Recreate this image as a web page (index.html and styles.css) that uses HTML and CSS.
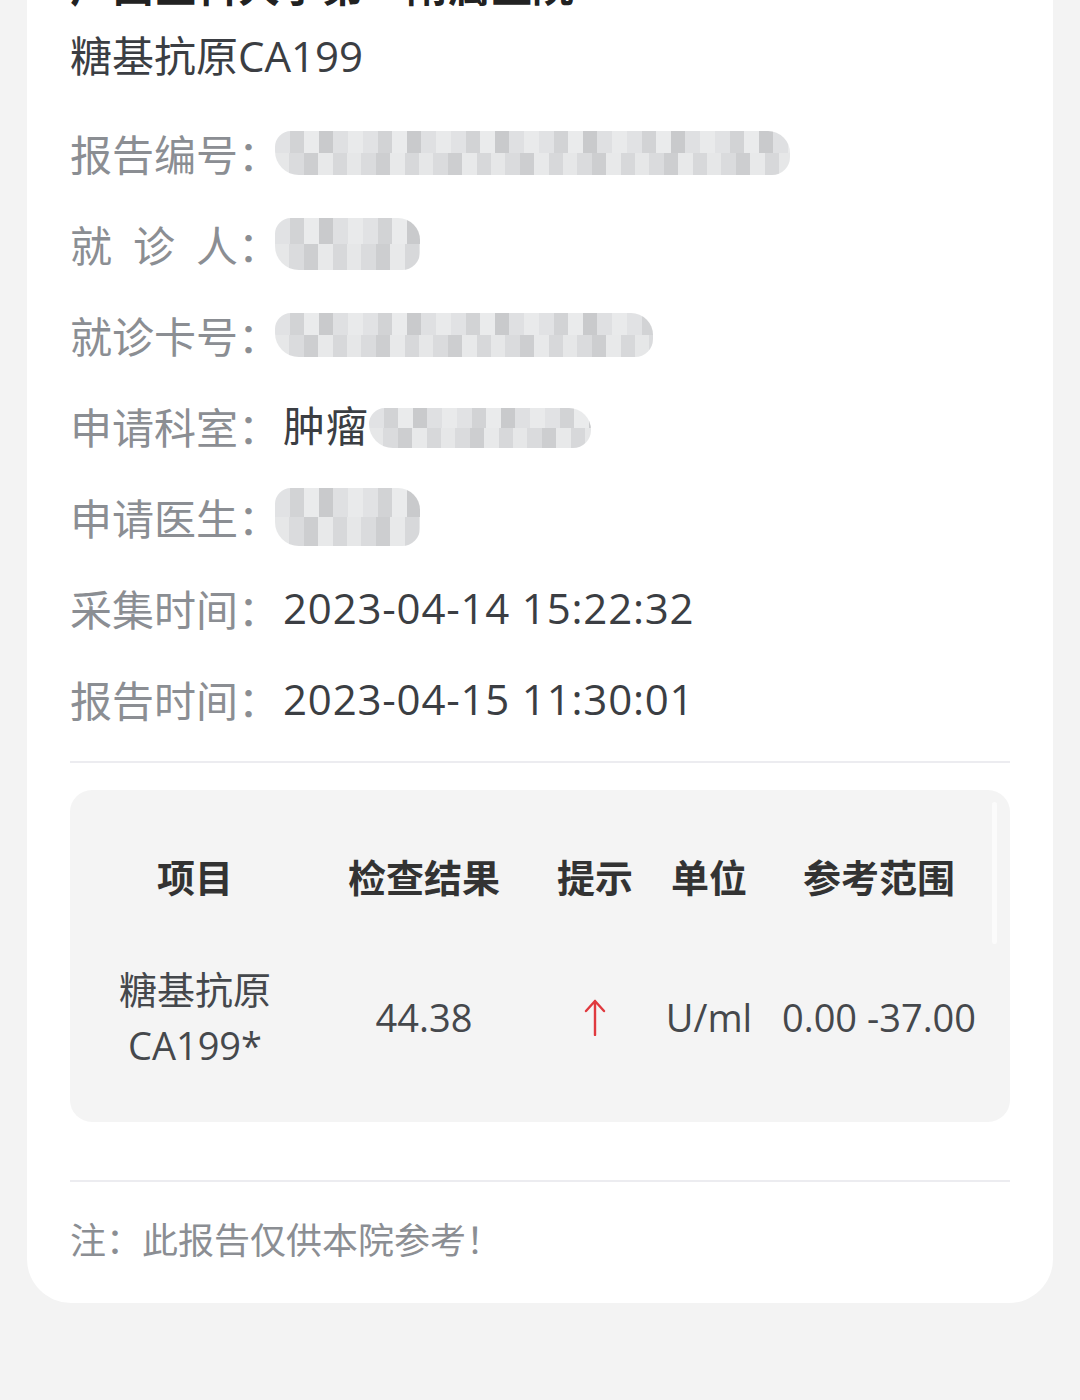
FILE: index.html
```html
<!DOCTYPE html>
<html lang="zh-CN">
<head>
  <meta charset="UTF-8" />
  <meta name="viewport" content="width=device-width, initial-scale=1.0"/>
  <title>检验报告详情</title>
  <link rel="stylesheet" href="styles.css">
</head>
<body>

  <div class="card">
    <h1 class="hospital">广西医科大学第一附属医院</h1>
    <div class="report-name">糖基抗原CA199</div>

    <div class="info">
      <div class="row">
        <span class="label">报告编号</span><span class="colon">：</span>
        <span class="mask mask-long"></span>
      </div>
      <div class="row">
        <span class="label">就 诊 人</span><span class="colon">：</span>
        <span class="mask mask-short"></span>
      </div>
      <div class="row">
        <span class="label">就诊卡号</span><span class="colon">：</span>
        <span class="mask mask-card"></span>
      </div>
      <div class="row">
        <span class="label">申请科室</span><span class="colon">：</span>
        <span class="value">肿瘤</span><span class="mask mask-dept"></span>
      </div>
      <div class="row">
        <span class="label">申请医生</span><span class="colon">：</span>
        <span class="mask mask-short mask-doc"></span>
      </div>
      <div class="row">
        <span class="label">采集时间</span><span class="colon">：</span>
        <span class="value">2023-04-14 15:22:32</span>
      </div>
      <div class="row">
        <span class="label">报告时间</span><span class="colon">：</span>
        <span class="value">2023-04-15 11:30:01</span>
      </div>
    </div>

    <hr class="divider" />

    <div class="result-box">
      <div class="scrollbar"></div>
      <div class="result-table">
        <div class="th">项目</div>
        <div class="th">检查结果</div>
        <div class="th">提示</div>
        <div class="th">单位</div>
        <div class="th">参考范围</div>

        <div class="td">糖基抗原<br>CA199*</div>
        <div class="td">44.38</div>
        <div class="td">
          <svg class="arrow-up" width="22" height="38" viewBox="0 0 22 38">
            <path d="M11 37 V3 M2 13 L11 3 L20 13" fill="none" stroke="#e0393e" stroke-width="2.4" stroke-linecap="round" stroke-linejoin="round"/>
          </svg>
        </div>
        <div class="td">U/ml</div>
        <div class="td">0.00 -37.00</div>
      </div>
    </div>

    <hr class="divider divider-bottom" />

    <p class="note">注：此报告仅供本院参考！</p>
  </div>

</body>
</html>
```

FILE: styles.css
```css
* {
  margin: 0;
  padding: 0;
  box-sizing: border-box;
  font-family: 'Open Sans', 'Noto Sans CJK SC', sans-serif;
}

body {
  background-color: #f3f3f3;
  min-height: 100vh;
}

.card {
  background-color: #fff;
  margin: -42px 27px 0;
  padding: 0 43px 40px;
  border-radius: 0 0 44px 44px;
}

.hospital {
  font-size: 42px;
  line-height: 56px;
  font-weight: 700;
  color: #222;
  white-space: nowrap;
}

.report-name {
  margin-top: 14px;
  font-size: 42px;
  line-height: 56px;
  color: #3b3e43;
}

.info {
  margin-top: 41px;
  display: flex;
  flex-direction: column;
  gap: 35px;
}

.row {
  display: flex;
  align-items: center;
  height: 56px;
  font-size: 42px;
  line-height: 56px;
}

.label {
  display: inline-block;
  width: 168px;
  color: #8b8e93;
  text-align: justify;
  text-align-last: justify;
  font-family: 'Noto Sans CJK SC', sans-serif;
}

.colon {
  width: 45px;
  color: #8b8e93;
  font-family: 'Noto Sans CJK SC', sans-serif;
}

.value {
  color: #3b3e43;
  white-space: nowrap;
  letter-spacing: 0.8px;
}

/* blurred personal data */
.mask {
  display: inline-block;
  height: 44px;
  border-radius: 16px 22px 18px 24px;
  background-color: #eeeff0;
  background-image:
    repeating-linear-gradient(90deg, #e1e2e4 0 15px, #d2d3d5 15px 29px, #eaebec 29px 44px, #c9cacc 44px 58px, #dfe0e2 58px 73px, #e9eaeb 73px 88px),
    repeating-linear-gradient(90deg, #e6e7e8 0 14px, #dadbdd 14px 29px, #cdced0 29px 43px, #e8e9ea 43px 58px, #d7d8da 58px 72px);
  background-size: 100% 50%, 100% 50%;
  background-position: 0 0, 0 100%;
  background-repeat: no-repeat;
}

.mask-long {
  width: 515px;
  margin-left: -8px;
}

.mask-short {
  width: 145px;
  height: 52px;
  margin-left: -8px;
}

.mask-card {
  width: 378px;
  margin-left: -8px;
}

.mask-dept {
  width: 222px;
  height: 40px;
  margin-top: 4px;
}

.mask-doc {
  height: 58px;
}

.divider {
  border: none;
  height: 2px;
  background-color: #ececf0;
  margin-top: 34px;
}

.result-box {
  position: relative;
  margin-top: 27px;
  background-color: #f4f4f4;
  border-radius: 22px;
  padding: 58px 30px 49px 20px;
}

.scrollbar {
  position: absolute;
  top: 12px;
  right: 13px;
  width: 5px;
  height: 142px;
  background-color: #fbfbfb;
  border-radius: 3px;
}

.result-table {
  display: grid;
  grid-template-columns: 210px 248px 94px 134px 206px;
  row-gap: 57px;
  align-items: center;
  text-align: center;
}

.th {
  font-size: 38px;
  line-height: 56px;
  font-weight: 700;
  color: #333;
  font-family: 'Noto Sans CJK SC', sans-serif;
  white-space: nowrap;
}

.td {
  font-size: 38px;
  line-height: 56px;
  color: #45484c;
  white-space: nowrap;
}

.arrow-up {
  display: block;
  margin: 0 auto;
}

.divider-bottom {
  margin-top: 58px;
}

.note {
  margin-top: 31px;
  font-size: 36px;
  line-height: 50px;
  color: #8b8e93;
  font-family: 'Noto Sans CJK SC', sans-serif;
}
```
